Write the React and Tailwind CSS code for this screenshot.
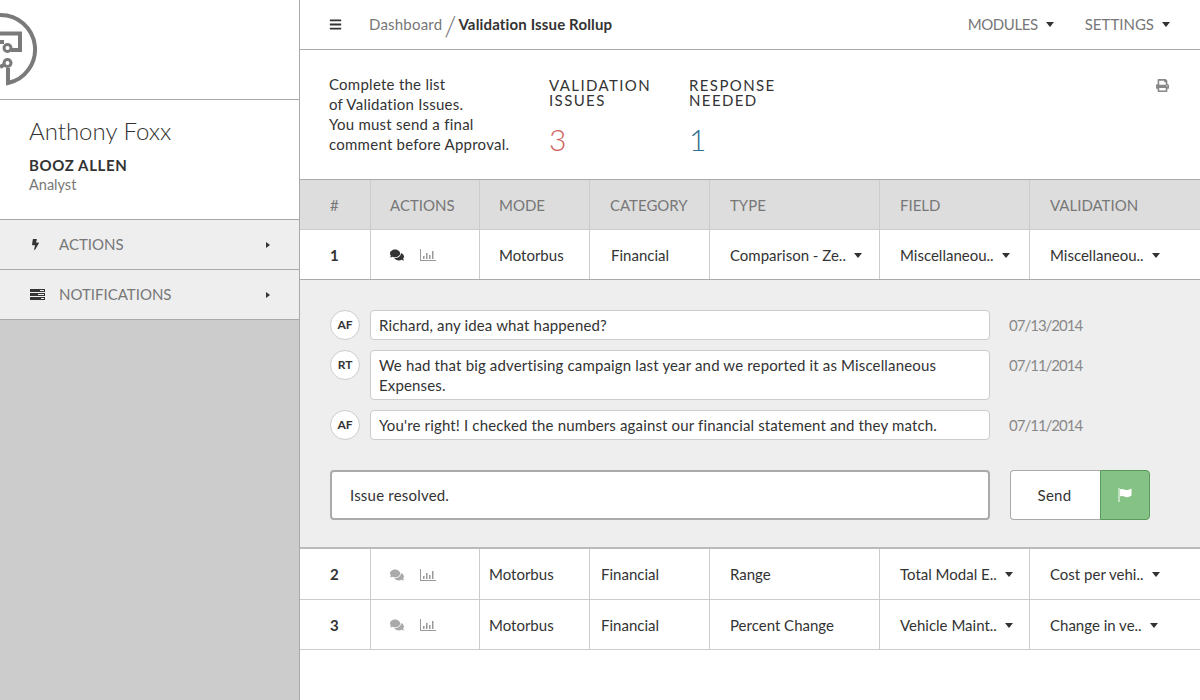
import React from "react";
import { FaBars, FaBolt, FaComments, FaPrint } from "react-icons/fa";

const cols = "grid grid-cols-[71px_109px_110px_120px_170px_150px_170px]";
const padding = ["pl-[30px]", "pl-[19px]", "pl-[19px]", "pl-[20px]", "pl-[20px]", "pl-[20px]", "pl-[20px]"];

const CaretDown = ({ className = "" }) => (
  <span className={`inline-block w-0 h-0 border-x-[4.5px] border-t-[5px] border-x-transparent border-t-[#333] ${className}`} />
);

const BarsIcon = ({ className }) => (
  <svg width="16" height="12" viewBox="0 0 16 12" className={className} fill="currentColor">
    <path d="M0 0h1v11h15v1H0z" />
    <path d="M3 7h1.500v3H3zM6 4h1.500v6H6zM9 6h1.500v4H9zM12 2h1.500v8H12z" />
  </svg>
);

const TasksIcon = () => (
  <svg width="15" height="11" viewBox="0 0 15 11" fill="#333">
    <path d="M0 0h15v3H0zM0 4h15v3H0zM0 8h15v3H0z" />
    <path d="M10 1h4v1h-4zM8 5h6v1H8zM11 9h3v1h-3z" fill="#eee" />
  </svg>
);

const FlagIcon = () => (
  <svg width="14" height="14" viewBox="0 0 14 14" fill="#fff">
    <path d="M0.500 0h1v14h-1z" />
    <path d="M2 1.500c3-1.500 5 1 7.500 0.500 1.500-0.300 3-1 4-1.500v7c-1 0.800-2.500 1.500-4 1.700-2.500 0.300-4.500-2-7.500-0.700z" />
  </svg>
);

const Logo = () => (
  <svg width="40" height="99" viewBox="0 0 40 99" fill="none" stroke="#7a7a7a" strokeWidth="4">
    <path d="M0 15a34.400 34.400 0 0 1 8 68V68" />
    <circle cx="7.500" cy="63" r="3.500" strokeWidth="3" />
    <circle cx="7.500" cy="48" r="3.500" strokeWidth="3" />
    <path d="M0 33.500H20V50H11" />
    <path d="M0 42H4M0 67L4 65" />
  </svg>
);

const SideItem = ({ icon, label }) => (
  <div className="flex items-center h-[50px] border-b border-[#aaa] bg-[#eee] pl-[30px] pr-[29px] text-[#777]">
    <span className="w-[29px] text-[#333]">{icon}</span>
    <span className="flex-1 text-[15px]">{label}</span>
    <span className="w-0 h-0 border-y-[3.5px] border-l-[4px] border-y-transparent border-l-[#333]" />
  </div>
);

const Sidebar = () => (
  <aside className="w-[300px] shrink-0 border-r border-[#aaa] bg-[#ccc] flex flex-col">
    <div className="h-[100px] bg-white border-b border-[#aaa]">
      <Logo />
    </div>
    <div className="h-[120px] bg-white border-b border-[#aaa] pl-[29px] pt-[16px]">
      <div className="text-[24px] leading-[30px] font-light text-[#333]">Anthony Foxx</div>
      <div className="mt-[9px] text-[15px] leading-[20px] font-bold tracking-[0.6px] text-[#333]">BOOZ ALLEN</div>
      <div className="text-[14.500px] leading-[20px] text-[#777]">Analyst</div>
    </div>
    <SideItem icon={<FaBolt className="text-[11px]" />} label="ACTIONS" />
    <SideItem icon={<TasksIcon />} label="NOTIFICATIONS" />
  </aside>
);

const Header = () => (
  <header className="h-[50px] shrink-0 border-b border-[#aaa] flex items-center pl-[29px] pr-[30px] text-[15px]">
    <FaBars className="text-[13px] text-[#333] mr-[27px]" />
    <span className="text-[#777] tracking-[0.2px]">Dashboard</span>
    <span className="mx-[2px] text-[28px] font-light leading-none text-[#777]">/</span>
    <span className="font-bold text-[#333] tracking-[0.15px]">Validation Issue Rollup</span>
    <div className="ml-auto flex items-center text-[#777]">
      <span className="tracking-[-0.4px]">MODULES</span>
      <CaretDown className="ml-[8px]" />
      <span className="ml-[31px]">SETTINGS</span>
      <CaretDown className="ml-[8px]" />
    </div>
  </header>
);

const Stat = ({ line1, line2, value, color }) => (
  <div className="w-[140px] pt-[4px]">
    <div className="text-[15px] leading-[15px] tracking-[1.4px] text-[#333]">
      {line1}
      <br />
      {line2}
    </div>
    <div className={`mt-[13px] text-[30px] leading-[36px] font-light ${color}`}>{value}</div>
  </div>
);

const Summary = () => (
  <section className="h-[129px] shrink-0 flex pl-[29px] pr-[30px] pt-[24px]">
    <p className="w-[220px] text-[15px] leading-[20px] tracking-[0.25px] text-[#333]">
      Complete the list
      <br />
      of Validation Issues.
      <br />
      You must send a final
      <br />
      comment before Approval.
    </p>
    <Stat line1="VALIDATION" line2="ISSUES" value="3" color="text-[#d0605e]" />
    <Stat line1="RESPONSE" line2="NEEDED" value="1" color="text-[#31708f]" />
    <FaPrint className="ml-auto mt-[5px] mr-[1px] text-[13px] text-[#888]" />
  </section>
);

const Cell = ({ children, className = "" }) => (
  <div className={`flex items-center pt-[1px] border-r border-[#ccc] last:border-r-0 ${className}`}>{children}</div>
);

const TableHead = () => (
  <div className={`${cols} h-[51px] bg-[#ddd] border-y border-t-[#aaa] border-b-[#ccc] text-[15px] text-[#777]`}>
    {["#", "ACTIONS", "MODE", "CATEGORY", "TYPE", "FIELD", "VALIDATION"].map((h, i) => (
      <Cell key={i} className={padding[i]}>
        {h}
      </Cell>
    ))}
  </div>
);

const Drop = ({ text }) => (
  <span className="flex items-center">
    {text}
    <CaretDown className="ml-[8px]" />
  </span>
);

const Row = ({ n, active, mode, cat, type, field, validation, className, modePad, catPad }) => (
  <div className={`${cols} bg-white border-b text-[15px] text-[#333] ${className}`}>
    <Cell className={`${padding[0]} font-bold`}>{n}</Cell>
    <Cell className={padding[1]}>
      <FaComments className={`text-[14px] ${active ? "text-[#333]" : "text-[#aaa]"}`} />
      <BarsIcon className="ml-[16px] text-[#999]" />
    </Cell>
    <Cell className={modePad}>{mode}</Cell>
    <Cell className={catPad}>{cat}</Cell>
    <Cell className={padding[4]}>{type}</Cell>
    <Cell className={padding[5]}>{field}</Cell>
    <Cell className={padding[6]}>{validation}</Cell>
  </div>
);

const Comment = ({ who, date, children, tall }) => (
  <div className="flex items-start">
    <div className="w-[30px] h-[30px] rounded-full bg-white border border-[#ccc] flex items-center justify-center text-[12px] font-bold text-[#333]">
      {who}
    </div>
    <div className={`ml-[10px] w-[620px] ${tall ? "h-[50px]" : "h-[30px]"} bg-white border border-[#ccc] rounded-[4px] px-[8px] py-[4px] text-[15px] leading-[20px] tracking-[0.15px] text-[#333]`}>
      {children}
    </div>
    <div className="ml-[19px] leading-[30px] text-[15px] tracking-[-1px] text-[#888]">{date}</div>
  </div>
);

const Thread = () => (
  <div className="h-[269px] bg-[#eee] border-b-2 border-[#bbb] pl-[30px] pt-[30px]">
    <div className="flex flex-col gap-[10px]">
      <Comment who="AF" date="07/13/2014">Richard, any idea what happened?</Comment>
      <Comment who="RT" date="07/11/2014" tall>
        We had that big advertising campaign last year and we reported it as Miscellaneous Expenses.
      </Comment>
      <Comment who="AF" date="07/11/2014">You're right! I checked the numbers against our financial statement and they match.</Comment>
    </div>
    <div className="flex mt-[30px]">
      <div className="w-[660px] h-[50px] bg-white border-2 border-[#aaa] rounded-[4px] pl-[18px] flex items-center text-[15px] tracking-[0.2px] text-[#333]">
        Issue resolved.
      </div>
      <div className="ml-[20px] w-[90px] h-[50px] pr-[2px] bg-white border border-[#aaa] border-r-0 rounded-l-[4px] flex items-center justify-center text-[15px] tracking-[0.3px] text-[#333]">
        Send
      </div>
      <div className="w-[50px] h-[50px] bg-[#85c285] border border-[#5a9a5a] rounded-r-[4px] flex items-center justify-center">
        <FlagIcon />
      </div>
    </div>
  </div>
);

export default function App() {
  return (
    <div className="flex w-[1200px] h-[700px] overflow-hidden bg-white font-['Lato','Open_Sans',sans-serif]">
      <Sidebar />
      <main className="flex-1 flex flex-col min-w-0">
        <Header />
        <Summary />
        <TableHead />
        <Row
          n="1"
          active
          mode="Motorbus"
          cat="Financial"
          type={<Drop text="Comparison - Ze.." />}
          field={<Drop text="Miscellaneou.." />}
          validation={<Drop text="Miscellaneou.." />}
          className="h-[50px] border-[#aaa]"
          modePad="pl-[19px]"
          catPad="pl-[21px]"
        />
        <Thread />
        <Row
          n="2"
          mode="Motorbus"
          cat="Financial"
          type="Range"
          field={<Drop text="Total Modal E.." />}
          validation={<Drop text="Cost per vehi.." />}
          className="h-[51px] border-[#ccc]"
          modePad="pl-[9px]"
          catPad="pl-[11px]"
        />
        <Row
          n="3"
          mode="Motorbus"
          cat="Financial"
          type="Percent Change"
          field={<Drop text="Vehicle Maint.." />}
          validation={<Drop text="Change in ve.." />}
          className="h-[50px] border-[#ccc]"
          modePad="pl-[9px]"
          catPad="pl-[11px]"
        />
      </main>
    </div>
  );
}
